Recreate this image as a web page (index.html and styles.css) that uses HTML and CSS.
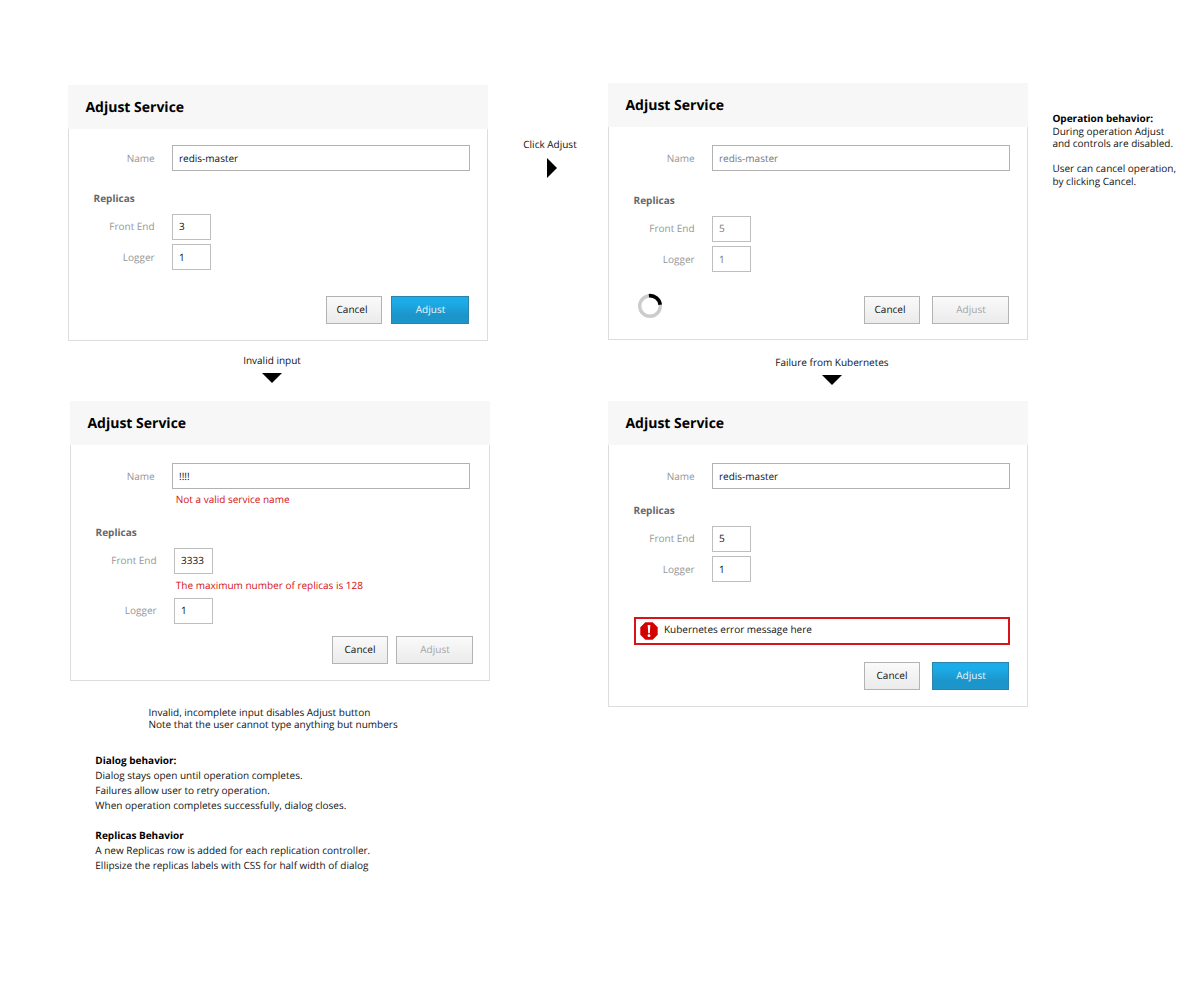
FILE: index.html
```html
<!DOCTYPE html>
<html lang="en">
<head>
<meta charset="utf-8">
<title>Adjust Service</title>
<link rel="stylesheet" href="styles.css">
</head>
<body>
<main class="board">
  <section class="column column-left">
    <article class="dialog dialog-initial">
      <h2 class="dialog-title">Adjust Service</h2>
      <div class="dialog-body">
        <div class="row"><span class="label">Name</span><span class="field wide">redis-master</span></div>
        <h3 class="group">Replicas</h3>
        <div class="row first"><span class="label">Front End</span><span class="field">3</span></div>
        <div class="row next"><span class="label">Logger</span><span class="field">1</span></div>
        <div class="actions"><span class="btn">Cancel</span><span class="btn submit primary">Adjust</span></div>
      </div>
    </article>
    <div class="step step-invalid"><span>Invalid input</span><svg class="arrow" width="20" height="10" viewBox="0 0 20 10"><path d="M0 0H20L10 10Z"/></svg></div>
    <article class="dialog dialog-invalid">
      <h2 class="dialog-title">Adjust Service</h2>
      <div class="dialog-body">
        <div class="row row-name"><span class="label">Name</span><span class="field wide">!!!!</span></div>
        <p class="hint">Not a valid service name</p>
        <h3 class="group">Replicas</h3>
        <div class="row first"><span class="label">Front End</span><span class="field">3333</span></div>
        <p class="hint">The maximum number of replicas is 128</p>
        <div class="row first"><span class="label">Logger</span><span class="field">1</span></div>
        <div class="actions"><span class="btn">Cancel</span><span class="btn submit off">Adjust</span></div>
      </div>
    </article>
    <p class="caption">Invalid, incomplete input disables Adjust button<br>Note that the user cannot type anything but numbers</p>
    <div class="notes">
      <h4>Dialog behavior:</h4>
      <p>Dialog stays open until operation completes.<br>Failures allow user to retry operation.<br>When operation completes successfully, dialog closes.</p>
      <h4>Replicas Behavior</h4>
      <p>A new Replicas row is added for each replication controller.<br>Ellipsize the replicas labels with CSS for half width of dialog</p>
    </div>
  </section>
  <div class="step step-click"><span>Click Adjust</span><svg class="arrow" width="10" height="20" viewBox="0 0 10 20"><path d="M0 0V20L10 10Z"/></svg></div>
  <section class="column column-right">
    <article class="dialog dialog-busy">
      <h2 class="dialog-title">Adjust Service</h2>
      <div class="dialog-body">
        <div class="row"><span class="label">Name</span><span class="field wide">redis-master</span></div>
        <h3 class="group">Replicas</h3>
        <div class="row first"><span class="label">Front End</span><span class="field">5</span></div>
        <div class="row next"><span class="label">Logger</span><span class="field">1</span></div>
        <div class="actions">
          <svg class="spinner" width="26" height="26" viewBox="0 0 26 26"><circle cx="13" cy="13" r="10.3" fill="none" stroke="#ccc" stroke-width="3.4"/><path d="M11.9 2.7A10.3 10.3 0 0 1 23.2 11.8" fill="none" stroke="#000" stroke-width="3.6"/></svg>
          <span class="btn">Cancel</span><span class="btn submit off">Adjust</span>
        </div>
      </div>
    </article>
    <div class="step step-failure"><span>Failure from Kubernetes</span><svg class="arrow" width="20" height="10" viewBox="0 0 20 10"><path d="M0 0H20L10 10Z"/></svg></div>
    <article class="dialog dialog-failed">
      <h2 class="dialog-title">Adjust Service</h2>
      <div class="dialog-body">
        <div class="row"><span class="label">Name</span><span class="field wide">redis-master</span></div>
        <h3 class="group">Replicas</h3>
        <div class="row first"><span class="label">Front End</span><span class="field">5</span></div>
        <div class="row next"><span class="label">Logger</span><span class="field">1</span></div>
        <div class="alert">
          <svg width="18" height="18" viewBox="0 0 18 18"><path d="M5.3 .3H12.7L17.7 5.3V12.7L12.7 17.7H5.3L.3 12.7V5.3Z" fill="#d40000"/><path d="M7.7 3H10.3L9.8 11.3H8.2Z" fill="#fff"/><circle cx="9" cy="13.7" r="1.4" fill="#fff"/></svg>
          <span>Kubernetes error message here</span>
        </div>
        <div class="actions"><span class="btn">Cancel</span><span class="btn submit primary">Adjust</span></div>
      </div>
    </article>
  </section>
  <aside class="side-note"><h4>Operation behavior:</h4><p>During operation Adjust<br>and controls are disabled.</p><p>User can cancel operation,<br>by clicking Cancel.</p></aside>
</main>
</body>
</html>
```
FILE: styles.css
```css
* { box-sizing: border-box; }
body { margin: 0; background: #fff; color: #111; font: 10px/15px "Open Sans", "Noto Sans", sans-serif; text-rendering: geometricPrecision; }
h2, h3, h4, p { margin: 0; }

.board { display: flex; align-items: flex-start; width: 1200px; height: 1000px; padding: 83px 0 0 68px; }
.column { display: flex; flex-direction: column; }
.column-left { width: 422px; padding-top: 2px; }
.column-right { width: 420px; }

.dialog { display: flex; flex-direction: column; width: 420px; }
.dialog-title { height: 44px; padding-left: 17.4px; background: #f7f7f7; color: #000; font-size: 14px; font-weight: 700; line-height: 45px; }
.dialog-body { flex: 1; display: flex; flex-direction: column; padding: 16px 17px 0 0; border: 1px solid #ddd; border-top: 0; }
.dialog-initial { height: 256px; }
.dialog-busy { height: 257px; margin-bottom: 1px; }
.dialog-invalid { height: 280px; margin: 0 0 1px 2px; }
.dialog-failed { height: 306px; }
.dialog-busy .dialog-body, .dialog-invalid .dialog-body, .dialog-failed .dialog-body { padding-top: 18px; }

.row { display: flex; gap: 17px; height: 26px; line-height: 26px; }
.row.next { margin-top: 4px; }
.label { width: 86px; padding-right: 0.4px; color: #969696; text-align: right; }
.field { width: 39px; padding-left: 6px; border: 1px solid #bebebe; line-height: 25px; }
.row.first { line-height: 25px; }
.row.first .field { line-height: 23px; }
.field.wide { width: 298px; border-color: #b2b2b2; }
.dialog-busy .field { color: #777; }
.group { height: 16px; margin: 19px 0 8px 24.6px; color: #666; font-size: 10px; font-weight: 700; line-height: 16px; }
.dialog-busy .group { margin-top: 21px; }
.dialog-failed .group { margin-top: 13px; }
.dialog-invalid .row-name .label { width: 84px; }
.dialog-invalid .group { margin-top: 17px; }
.hint { height: 18px; margin-left: 104.8px; color: #d40f14; line-height: 20px; }
.dialog-invalid .group + .row + .hint { height: 24px; line-height: 22px; }

.actions { display: flex; justify-content: flex-end; margin: 26px 1px 0 0; }
.dialog-busy .actions { margin-top: 24px; }
.dialog-invalid .actions { margin: 12px -1px 0 0; }
.dialog-failed .actions { margin-top: 17px; }
.btn { width: 56px; height: 28px; padding-right: 4px; border: 1px solid #b3b3b3; background: linear-gradient(#fafafa, #ebebeb); line-height: 25px; text-align: center; }
.btn.submit { width: 77px; margin-left: 12px; padding: 0 0 0 1px; }
.dialog-invalid .btn { padding: 0; }
.dialog-failed .btn { padding-right: 0; }
.dialog-invalid .btn.submit { margin-left: 8px; padding-left: 1px; }
.dialog-initial .btn.submit { width: 78px; margin-left: 9px; }
.btn.primary { border-color: #2d84aa; background: linear-gradient(#1cace8 20%, #1c95ca 70%); color: #e8f6fc; }
.btn.off { color: #a5a5a5; }
.spinner { margin: -3px auto 0 28px; }
.alert { display: flex; gap: 6px; width: 376px; height: 28px; margin: 35px 0 0 25px; padding: 3px 4px; border: 2px solid #d8131b; line-height: 18px; }
.alert span { margin-top: -2px; }

.step { display: flex; flex-direction: column; align-items: center; line-height: 15px; }
.arrow { fill: #000; }
.step-invalid { width: 120px; height: 60px; margin-left: 144px; padding-top: 12px; }
.step-invalid .arrow { margin-top: 5px; }
.step-click { width: 118px; padding: 54px 0 0 2px; }
.step-click .arrow { margin: 6px 0 0 4px; }
.step-failure { width: 130px; height: 60px; margin-left: 159px; padding-top: 14px; }
.step-failure .arrow { margin-top: 5px; }

.caption { margin: 23.5px 0 0 80.5px; line-height: 12.5px; }
.notes { margin: 22px 0 0 27.3px; }
.notes h4, .side-note h4 { color: #000; font-size: 10px; font-weight: 700; }
.notes p + h4 { margin-top: 15px; }
.side-note { margin: 29px 0 0 24.4px; line-height: 12.5px; white-space: nowrap; }
.side-note p + p { margin-top: 12.5px; }
```
